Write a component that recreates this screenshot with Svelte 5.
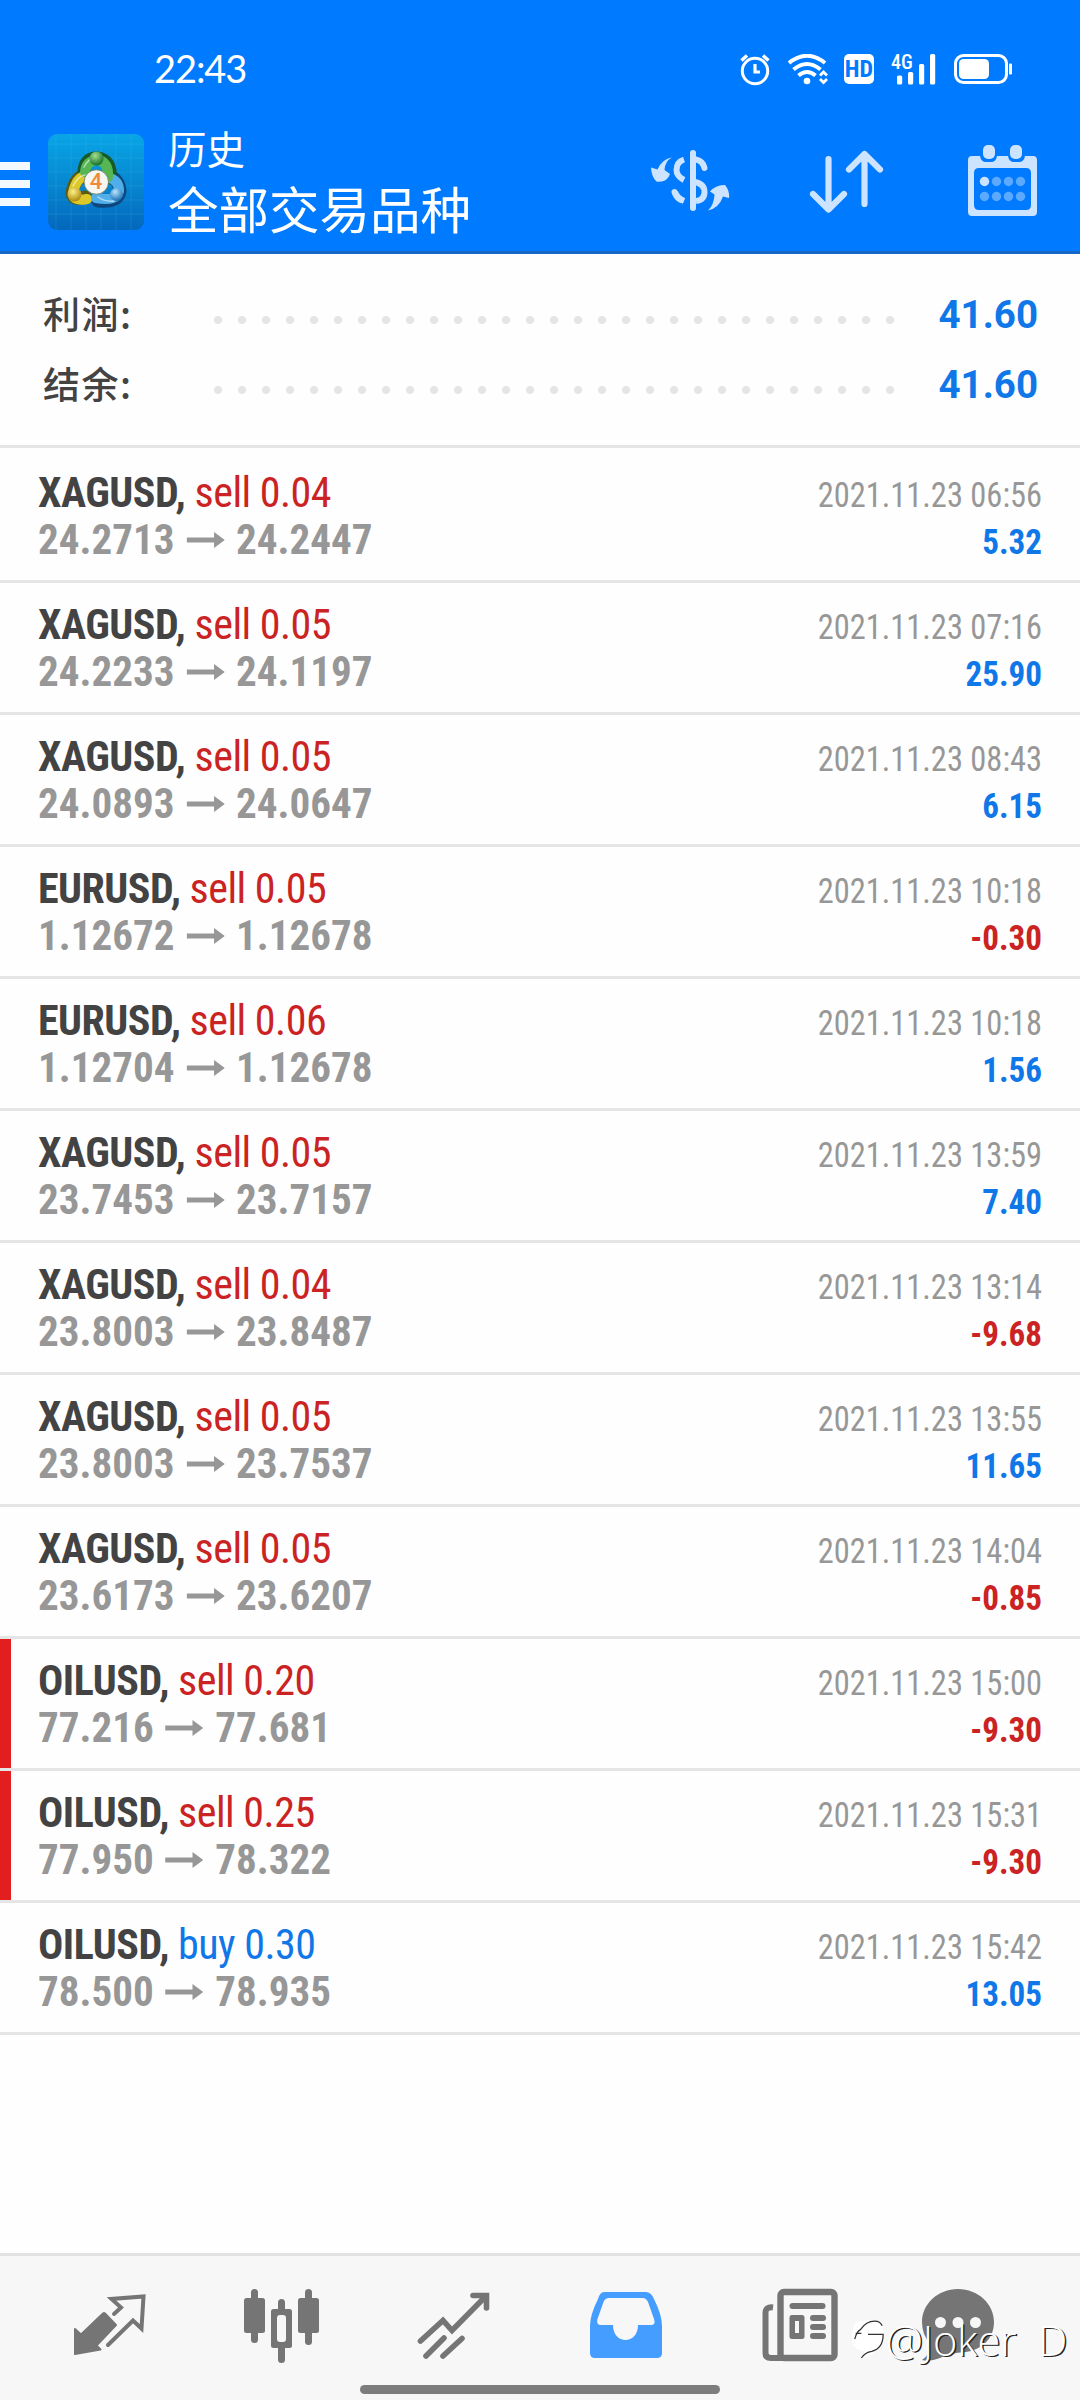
<script>
  const summary = [
    { label: '利润:', value: '41.60' },
    { label: '结余:', value: '41.60' },
  ];

  const deals = [
    { symbol: 'XAGUSD', side: 'sell', lots: '0.04', open: '24.2713', close: '24.2447', time: '2021.11.23 06:56', profit: '5.32' },
    { symbol: 'XAGUSD', side: 'sell', lots: '0.05', open: '24.2233', close: '24.1197', time: '2021.11.23 07:16', profit: '25.90' },
    { symbol: 'XAGUSD', side: 'sell', lots: '0.05', open: '24.0893', close: '24.0647', time: '2021.11.23 08:43', profit: '6.15' },
    { symbol: 'EURUSD', side: 'sell', lots: '0.05', open: '1.12672', close: '1.12678', time: '2021.11.23 10:18', profit: '-0.30' },
    { symbol: 'EURUSD', side: 'sell', lots: '0.06', open: '1.12704', close: '1.12678', time: '2021.11.23 10:18', profit: '1.56' },
    { symbol: 'XAGUSD', side: 'sell', lots: '0.05', open: '23.7453', close: '23.7157', time: '2021.11.23 13:59', profit: '7.40' },
    { symbol: 'XAGUSD', side: 'sell', lots: '0.04', open: '23.8003', close: '23.8487', time: '2021.11.23 13:14', profit: '-9.68' },
    { symbol: 'XAGUSD', side: 'sell', lots: '0.05', open: '23.8003', close: '23.7537', time: '2021.11.23 13:55', profit: '11.65' },
    { symbol: 'XAGUSD', side: 'sell', lots: '0.05', open: '23.6173', close: '23.6207', time: '2021.11.23 14:04', profit: '-0.85' },
    { symbol: 'OILUSD', side: 'sell', lots: '0.20', open: '77.216', close: '77.681', time: '2021.11.23 15:00', profit: '-9.30', flagged: true },
    { symbol: 'OILUSD', side: 'sell', lots: '0.25', open: '77.950', close: '78.322', time: '2021.11.23 15:31', profit: '-9.30', flagged: true },
    { symbol: 'OILUSD', side: 'buy', lots: '0.30', open: '78.500', close: '78.935', time: '2021.11.23 15:42', profit: '13.05' },
  ];
</script>

<div class="screen">
  <header>
    <div class="status">
      <span class="clock">22:43</span>
      <div class="indicators">
        <svg class="alarm" width="30" height="32" viewBox="0 0 30 32" fill="none" stroke="#fff" stroke-width="3">
          <circle cx="15" cy="17" r="12.7" />
          <path d="M15 10v8h5" stroke-width="3.2" />
          <path d="M1.5 6.5 7 1.5M28.500 6.500 23 1.500" stroke-width="3.4" />
        </svg>
        <svg class="wifi" width="40" height="32" viewBox="0 0 40 32" fill="none" stroke="#fff" stroke-width="4">
          <path d="M1 9Q19-5.500 37 9M5.500 15.500Q19 4.500 32.500 15.500M10.500 21.500Q19 14.500 27.500 21.500" />
          <circle cx="19" cy="27" r="3.3" fill="#fff" stroke="none" />
          <path d="M32 21.500 35.500 18 39 21.500M32 25 35.500 28.500 39 25" stroke-width="2.800" />
        </svg>
        <span class="hd">HD</span>
        <div class="signal">
          <span class="net">4G</span>
          <svg width="46" height="32" viewBox="0 0 46 32" fill="#fff">
            <rect x="6" y="21.500" width="5.200" height="9" rx="1.500" />
            <rect x="17" y="18" width="5.200" height="12.500" rx="1.500" />
            <rect x="28" y="10" width="5.200" height="20.500" rx="1.500" />
            <rect x="39" y="0" width="5.200" height="30.500" rx="1.500" />
          </svg>
        </div>
        <svg class="battery" width="60" height="32" viewBox="0 0 60 32">
          <rect x="1.500" y="1.500" width="51" height="27" rx="8" fill="none" stroke="#fff" stroke-width="3" />
          <rect x="5" y="5" width="30" height="20" rx="4.500" fill="#fff" />
          <rect x="55" y="9.500" width="3" height="11" rx="1" fill="#fff" />
        </svg>
      </div>
    </div>

    <div class="toolbar">
      <div class="burger"><i></i><i></i><i></i></div>
      <svg class="logo" width="96" height="96" viewBox="0 0 96 96">
        <defs>
          <linearGradient id="bg" x1="0" y1="0" x2="0" y2="1">
            <stop offset="0" stop-color="#08a5e6" />
            <stop offset="0.5" stop-color="#0788d0" />
            <stop offset="1" stop-color="#0467bc" />
          </linearGradient>
          <radialGradient id="gs" cx="0.4" cy="0.3" r="0.700">
            <stop offset="0" stop-color="#a5e08d" /><stop offset="1" stop-color="#15702c" />
          </radialGradient>
          <radialGradient id="ys" cx="0.4" cy="0.3" r="0.700">
            <stop offset="0" stop-color="#fff08a" /><stop offset="1" stop-color="#ac8a0c" />
          </radialGradient>
          <radialGradient id="bs" cx="0.4" cy="0.3" r="0.700">
            <stop offset="0" stop-color="#b9e6ff" /><stop offset="1" stop-color="#1c70b5" />
          </radialGradient>
        </defs>
        <rect width="96" height="96" rx="9" fill="url(#bg)" />
        <path d="M8 0v96M23 0v96M38 0v96M53 0v96M68 0v96M83 0v96M0 10h96M0 24h96M0 38h96M0 52h96M0 66h96M0 80h96" stroke="#5cc7f5" stroke-opacity="0.160" />
        <g stroke-linecap="round" fill="none">
          <path d="M37 63Q25 67 24 59Q27 43 37 41" stroke="#5b5a10" stroke-width="13" />
          <path d="M62 42Q71 46 72 57Q70 69 50 67" stroke="#0d477d" stroke-width="13" />
          <path d="M36 39Q36 24 49 24Q64 26 62 44" stroke="#175b2b" stroke-width="13" />
          <path d="M39 65Q25 68 25 59Q28 44 37 42" stroke="#dcc929" stroke-width="10" />
          <path d="M62 44Q71 47 71 57Q69 68 48 64" stroke="#50aee8" stroke-width="10" />
          <path d="M37 38Q38 27 49 26Q61 27 60 43" stroke="#56b654" stroke-width="10" />
          <path d="M25 52Q30 42 37 41M66 67Q57 68 50 63M36 33Q41 24 46 24" stroke="#fff" stroke-opacity="0.550" stroke-width="1.500" />
        </g>
        <circle cx="48.500" cy="24.500" r="7" fill="url(#gs)" />
        <circle cx="26.500" cy="60.500" r="7" fill="url(#ys)" />
        <circle cx="68.500" cy="60.500" r="6.500" fill="url(#bs)" />
        <circle cx="48.300" cy="48" r="12.200" fill="#f8f6f3" stroke="#5b6c43" stroke-width="0.700" />
        <text x="48" y="55" text-anchor="middle" class="four">4</text>
      </svg>
      <div class="titles">
        <span class="caption">历史</span>
        <span class="heading">全部交易品种</span>
      </div>
      <div class="actions">
        <svg class="money" width="80" height="62" viewBox="0 0 80 62" fill="#cce4ff">
          <path d="M22 7.500Q15 11 14.500 20L20 24Q17 33 6.500 31.500Q1.500 27 1 17.500L7.500 19.500Q12 9 22 7.500Z" />
          <path d="M58 60.500Q64 55 64.500 44.500L60 41.500Q66 34.500 75 35Q80 41 79 48L73 46.500Q69 58 58 60.500Z" />
          <rect x="40" y="0" width="6" height="61" rx="3" />
          <g fill="none" stroke="#cce4ff" stroke-width="6" stroke-linecap="round">
            <path d="M34 9.500Q26.500 12 26.500 20Q26.500 26 34 30" stroke-linecap="butt" />
            <path d="M46 9.500Q53 11 54.500 18" />
            <path d="M45 32Q54.500 34 54.500 42Q54.500 50 46 51" stroke-linecap="butt" />
            <path d="M24.500 42Q26.500 48 31 50" />
            <path d="M25 42Q27 48 34 51" stroke-linecap="butt" />
          </g>
        </svg>
        <svg class="sort" width="76" height="64" viewBox="0 0 76 64" fill="none" stroke="#cce4ff" stroke-width="6.200" stroke-linecap="round" stroke-linejoin="round">
          <path d="M19.500 9v50M4 44 19.500 59.500 35 44" />
          <path d="M55.500 54V4M40 19.500 55.500 4 71 19.500" />
        </svg>
        <svg class="calendar" width="70" height="72" viewBox="0 0 70 72">
          <path fill="#cce4ff" fill-rule="evenodd" d="M4 11h8q1 6 6 6h5q5 0 6-6h11q1 6 6 6h5q5 0 6-6h8q4 0 4 4v52q0 4-4 4H4q-4 0-4-4V15q0-4 4-4ZM11 23q-5 0-5 5v32q0 5 5 5h47q5 0 5-5V28q0-5-5-5Z" />
          <rect x="15" y="0" width="12" height="14" rx="5" fill="#cce4ff" />
          <rect x="42" y="0" width="12" height="14" rx="5" fill="#cce4ff" />
          <circle cx="16.500" cy="36.500" r="4.700" fill="#cce4ff" />
          <g fill="#5caaff">
            <circle cx="28.500" cy="36.500" r="4.700" /><circle cx="40.500" cy="36.500" r="4.700" /><circle cx="52.500" cy="36.500" r="4.700" />
            <circle cx="16.500" cy="51.500" r="4.700" /><circle cx="28.500" cy="51.500" r="4.700" /><circle cx="40.500" cy="51.500" r="4.700" /><circle cx="52.500" cy="51.500" r="4.700" />
          </g>
        </svg>
      </div>
    </div>
  </header>

  <section class="summary">
    {#each summary as item}
      <div class="total">
        <span class="label">{item.label}</span>
        <span class="dots"></span>
        <span class="value">{item.value}</span>
      </div>
    {/each}
  </section>

  <main>
    {#each deals as deal}
      <article class:flagged={deal.flagged}>
        <div class="left">
          <div class="title">
            <b>{deal.symbol},</b>
            <span class={deal.side}>{deal.side} {deal.lots}</span>
          </div>
          <div class="prices">
            <span>{deal.open}</span>
            <svg width="39" height="16" viewBox="0 0 39 16" fill="#979797">
              <path d="M0 5.500H28V0L39 8 28 16V10.500H0Z" />
            </svg>
            <span>{deal.close}</span>
          </div>
        </div>
        <div class="right">
          <div class="time">{deal.time}</div>
          <div class="profit" class:loss={deal.profit.startsWith('-')}>{deal.profit}</div>
        </div>
      </article>
    {/each}
  </main>

  <nav>
    <div class="tabs">
      <svg width="76" height="76" viewBox="0 0 76 76">
        <path fill="#757575" stroke="#757575" stroke-width="2" stroke-linejoin="round" d="M3 66V41L9 46.500 31 25.500Q32 24.500 33 25.500L44 37 24.500 57.500 28.500 61.500Z" />
        <path fill="none" stroke="#757575" stroke-width="4" stroke-linejoin="miter" stroke-linecap="round" d="M42 26 49 19.500 39.500 11 71.500 8.500 69.500 40.500 61 32.500 36 57" />
      </svg>
      <svg width="76" height="76" viewBox="0 0 76 76" fill="#757575">
        <rect x="0" y="10" width="21" height="35" rx="2.500" />
        <rect x="7" y="1" width="7" height="54" rx="3.500" />
        <rect x="54" y="10" width="21" height="35" rx="2.500" />
        <rect x="61" y="1" width="7" height="56" rx="3.500" />
        <rect x="34" y="11" width="7" height="64" rx="3.500" />
        <rect x="27" y="21" width="21" height="39" rx="2.500" />
        <rect x="33" y="27" width="9" height="27" rx="3" fill="#f7f7f7" />
      </svg>
      <svg width="76" height="76" viewBox="0 0 76 76" fill="none" stroke="#757575" stroke-width="5.600" stroke-linecap="round" stroke-linejoin="round">
        <path d="M4.500 53 27 32.500 36 42.500 70 8M57 7.500H70.500V20" stroke-linejoin="miter" />
        <path d="M10 68 28 50M27 68 46 50.500" />
      </svg>
      <svg class="inbox" width="76" height="76" viewBox="0 0 76 76">
        <path fill="#459dff" fill-rule="evenodd" d="M15 4H57Q62 4 65 11Q73 27 73 38V65Q73 70 68 70H6Q1 70 1 65V38Q1 27 9 11Q11 4 15 4ZM20 10Q16 10 14.500 14L8.500 31Q7 37 12 37H24C24 57 49 57 49 37H62Q67 37 65 31L59 14Q57 10 54 10Z" />
      </svg>
      <svg class="news" width="76" height="76" viewBox="0 0 76 76">
        <path fill="none" stroke="#757575" stroke-width="6" d="M11 19.500Q3.500 18.500 3.500 25V65Q3.500 70 9 70H25" />
        <rect x="18.500" y="4" width="54" height="66" rx="3.500" fill="none" stroke="#757575" stroke-width="6.400" />
        <g fill="#757575">
          <rect x="27.500" y="15" width="36" height="6" rx="3" />
          <path fill-rule="evenodd" d="M30 27h10q2.500 0 2.500 2.500v19q0 2.500-2.500 2.500H30q-2.500 0-2.500-2.500v-19Q27.500 27 30 27ZM33 33v12h4V33Z" />
          <rect x="48" y="27" width="16" height="6" rx="3" />
          <rect x="48" y="36" width="16" height="6" rx="3" />
          <rect x="48" y="45" width="16" height="6" rx="3" />
        </g>
      </svg>
      <svg class="chat" width="76" height="76" viewBox="0 0 76 76">
        <path fill="#757575" d="M38 1C58 1 74 16 74 34C74 52 60 62 46 64Q28 65 20 70Q10 74 2 72Q11 66 10 55Q2 47 2 34C2 16 18 1 38 1Z" />
        <circle cx="20.500" cy="34.500" r="5.500" fill="#f7f7f7" />
        <circle cx="38" cy="34.500" r="5.500" fill="#f7f7f7" />
        <circle cx="55.500" cy="34.500" r="5.500" fill="#f7f7f7" />
      </svg>
    </div>
    <div class="home"></div>
    <div class="watermark">
      <svg width="36" height="42" viewBox="0 0 38 42" fill="none">
        <path fill="#fff" d="M5 3Q20-3 35 4V21Q33 34 12 41L16 33Q0 32 2 14Z" />
        <path stroke="#333" stroke-width="1.300" d="M5 20Q7 12 11 10Q17 1 26 1Q32 1 34 6M6 14H12M19 15H35Q35 30 23 33Q16 34 12 40" />
      </svg>
      <span>@Joker&nbsp;&nbsp;D</span>
    </div>
  </nav>
</div>

<style>
  :global(body) {
    background: #fff;
  }
  .screen {
    width: 1080px;
    height: 2400px;
    display: flex;
    flex-direction: column;
    background: #fefefe;
    font-family: Roboto, 'Noto Sans CJK SC', sans-serif;
    overflow: hidden;
  }
  svg {
    display: block;
    flex: none;
  }
  header {
    height: 254px;
    box-sizing: border-box;
    background: #007aff;
    border-bottom: 3px solid #1767c9;
    color: #fff;
  }
  .status {
    height: 124px;
    padding: 0 66px 0 154px;
    display: flex;
    justify-content: space-between;
  }
  .clock {
    font: 38px/38px Lato, sans-serif;
    letter-spacing: -1.100px;
    padding-top: 49px;
  }
  .indicators {
    display: flex;
    padding-top: 54px;
  }
  .wifi {
    margin-left: 18px;
  }
  .hd {
    margin-left: 16px;
    width: 30px;
    height: 30px;
    border-radius: 5px;
    background: #fff;
    color: #007aff;
    font: 700 24px/31px 'Roboto Condensed', Roboto, sans-serif;
    text-align: center;
  }
  .signal {
    position: relative;
    margin-left: 17px;
  }
  .net {
    position: absolute;
    left: 0;
    top: -2px;
    font: 500 20px/20px 'Roboto Condensed', Roboto, sans-serif;
  }
  .battery {
    margin-left: 17px;
  }
  .toolbar {
    display: flex;
    align-items: flex-start;
    height: 127px;
  }
  .burger {
    display: flex;
    flex-direction: column;
    gap: 10px;
    width: 30px;
    padding-top: 38px;
  }
  .burger i {
    height: 8px;
    background: #f3faff;
  }
  .logo {
    margin: 10px 0 0 18px;
  }
  .four {
    font: 500 22px Roboto, sans-serif;
    fill: #f28a35;
  }
  .titles {
    margin-left: 24px;
    display: flex;
    flex-direction: column;
    font-family: 'Noto Sans CJK SC', sans-serif;
    font-weight: 400;
    white-space: nowrap;
  }
  .caption {
    font-size: 38.500px;
    line-height: 47px;
  }
  .heading {
    font-size: 50.500px;
    line-height: 73px;
  }
  .actions {
    display: flex;
    margin-left: auto;
    padding-right: 42px;
  }
  .money {
    margin-top: 26px;
  }
  .sort {
    margin: 26px 0 0 79px;
  }
  .calendar {
    margin: 21px 0 0 83px;
  }
  .summary {
    height: 194px;
    box-sizing: border-box;
    padding: 26px 42px 0 43px;
    border-bottom: 3px solid #e5e5e5;
  }
  .total {
    display: flex;
    align-items: center;
    height: 70px;
  }
  .label {
    width: 163px;
    padding-bottom: 5px;
    font: 500 37px/50px 'Noto Sans CJK SC', sans-serif;
    letter-spacing: 1.500px;
    color: #434343;
  }
  .dots {
    width: 696px;
    height: 8px;
    margin-top: 10px;
    background: radial-gradient(circle, #e5e5e5 3.600px, transparent 4.400px) 0 0 / 24px 8px repeat-x;
  }
  .value {
    margin-left: auto;
    font-size: 38.500px;
    font-weight: 700;
    line-height: 46px;
    color: #0f77e8;
  }
  main {
    flex: 1;
    padding-top: 3px;
    font-family: 'Roboto Condensed', Roboto, sans-serif;
  }
  article {
    display: flex;
    justify-content: space-between;
    height: 129px;
    padding: 0 38px;
    border-bottom: 3px solid #e5e5e5;
    white-space: nowrap;
  }
  .flagged {
    background: linear-gradient(#e31e1e, #e31e1e) 0 0 / 11px 100% no-repeat;
  }
  .left {
    padding-top: 18px;
    line-height: 47px;
    font-size: 42px;
  }
  .title {
    letter-spacing: -0.500px;
  }
  b {
    color: #434343;
  }
  .sell {
    color: #cb2323;
  }
  .buy {
    color: #0f77e8;
  }
  .prices {
    display: flex;
    align-items: center;
    gap: 12px;
    font-weight: 700;
    color: #979797;
    transform: scaleX(0.978);
    transform-origin: left;
  }
  .right {
    padding-top: 21px;
    text-align: right;
    font-size: 35px;
    line-height: 47px;
  }
  .time {
    color: #979797;
    transform: scaleX(0.927);
    transform-origin: right;
  }
  .profit {
    font-weight: 700;
    color: #0f77e8;
    transform: scaleX(0.945);
    transform-origin: right;
  }
  .loss {
    color: #cb2323;
  }
  nav {
    position: relative;
    height: 147px;
    box-sizing: border-box;
    border-top: 3px solid #e2e2e2;
    background: #f7f7f7;
  }
  .tabs {
    display: flex;
    gap: 96px;
    padding: 32px 0 0 72px;
  }
  .tabs .inbox {
    margin-left: 1px;
  }
  .tabs .news {
    margin-left: 1px;
  }
  .tabs .chat {
    margin-left: -14px;
  }
  .home {
    width: 360px;
    height: 9px;
    margin: 21px auto 0;
    border-radius: 5px;
    background: #7d7d7d;
  }
  .watermark {
    position: absolute;
    left: 850px;
    top: 60px;
    display: flex;
    align-items: center;
    color: #fff;
    font: 300 41.500px/48px 'Open Sans', 'Noto Sans', sans-serif;
    text-shadow: 1.500px 1px 0.500px #222;
    white-space: nowrap;
  }
</style>
